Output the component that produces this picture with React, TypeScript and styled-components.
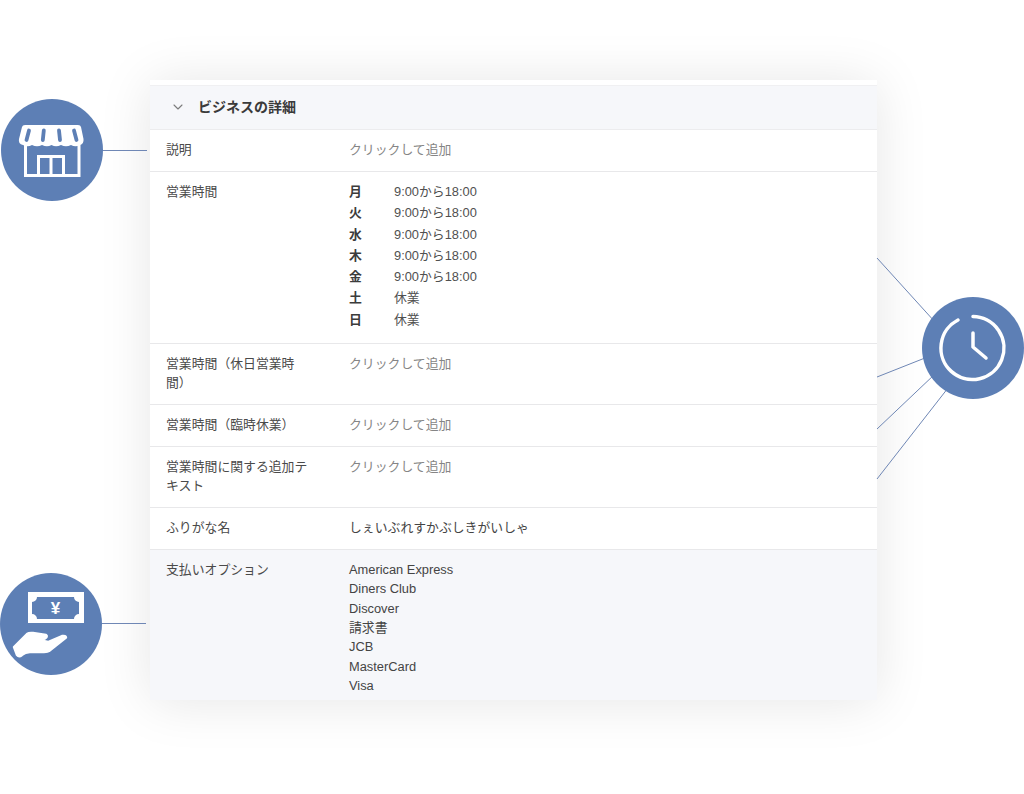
import { Fragment } from 'react'
import styled, { createGlobalStyle } from 'styled-components'
import { ChevronDown } from 'lucide-react'

const GlobalStyle = createGlobalStyle`
  html, body {
    margin: 0;
    padding: 0;
    background: #fff;
  }
`

const Stage = styled.div`
  position: relative;
  width: 1024px;
  height: 794px;
  padding: 80px 147px 0 150px;
  box-sizing: border-box;
  overflow: hidden;
  background: #fff;
  font-family: 'Liberation Sans', 'Noto Sans CJK JP', sans-serif;
  font-size: 12.85px;
  color: #444;
`

const Card = styled.section`
  display: flex;
  flex-direction: column;
  height: 620px;
  padding-top: 5px;
  box-sizing: border-box;
  overflow: hidden;
  background: #fff;
  box-shadow: 0 2px 50px rgba(0, 0, 0, 0.1);
`

const Header = styled.header`
  display: flex;
  align-items: center;
  gap: 12px;
  height: 45px;
  flex: none;
  padding: 0 0 3px 20px;
  box-sizing: border-box;
  background: #f6f7fa;
  border-top: 1px solid #f0f0f2;
  border-bottom: 1px solid #ececee;
  font-size: 14px;
  font-weight: 700;
  color: #3a3a3a;
  svg {
    color: #7b7b7b;
    margin-top: 2px;
  }
`

const Row = styled.div<{ $shaded?: boolean }>`
  display: grid;
  grid-template-columns: 183px 1fr;
  flex: none;
  padding: 10px 0 12px 16px;
  line-height: 19px;
  background: ${(p) => (p.$shaded ? '#f6f7fa' : '#fff')};
  border-bottom: 1px solid #e8e8ea;
  &:last-child {
    flex: 1;
    border-bottom: 0;
  }
`

const Label = styled.div`
  width: 145px;
  color: #4a4a4a;
`

const Placeholder = styled.div`
  color: #858585;
`

const Hours = styled.div`
  display: grid;
  grid-template-columns: 45px 1fr;
  margin: -1px 0 1px;
  line-height: 21.3px;
  color: #505050;
`

const Day = styled.span`
  font-weight: 700;
  color: #3c3c3c;
`

const Options = styled.ul`
  margin: 0;
  padding: 0;
  list-style: none;
  line-height: 19.3px;
`

const Badge = styled.div<{ $left: number; $top: number }>`
  position: absolute;
  left: ${(p) => p.$left}px;
  top: ${(p) => p.$top}px;
  width: 102px;
  height: 102px;
  border-radius: 50%;
  background: #5d7fb5;
  svg {
    display: block;
  }
`

const Connectors = styled.svg`
  position: absolute;
  left: 0;
  top: 0;
  stroke: #6f87b5;
  stroke-width: 1;
`

const hours = [
  ['月', '9:00から18:00'],
  ['火', '9:00から18:00'],
  ['水', '9:00から18:00'],
  ['木', '9:00から18:00'],
  ['金', '9:00から18:00'],
  ['土', '休業'],
  ['日', '休業'],
]

const payments = ['American Express', 'Diners Club', 'Discover', '請求書', 'JCB', 'MasterCard', 'Visa']

function StoreIcon() {
  return (
    <svg width="102" height="102" viewBox="0 0 102 102" fill="none">
      <path d="M24.5 44V76.5H78V44" stroke="#fff" strokeWidth="3" />
      <path d="M37.5 76.5V57.5H62.5V76.5M50 57.5V76.5" stroke="#fff" strokeWidth="3" />
      <path
        d="M24 26H77Q79.5 26 80 28L82.5 40Q83 45 79 46Q74.5 48.5 70 46Q65 48.5 60 46Q55 48.5 50.5 46Q46 48.5 41 46Q36 48.5 31 46Q26.5 48.5 22 46Q17 45 18 40L21 28Q21.5 26 24 26Z"
        fill="#fff"
      />
      <path
        d="M28 31.5L25.5 41M42.8 31.5L41.8 41M58 31.5L59 41M73 31.5L75.5 41"
        stroke="#5d7fb5"
        strokeWidth="3.8"
        strokeLinecap="round"
      />
    </svg>
  )
}

function ClockIcon() {
  return (
    <svg width="102" height="102" viewBox="0 0 102 102" fill="none" stroke="#fff" strokeWidth="3.5" strokeLinecap="round" strokeLinejoin="round">
      <path d="M51 19.5A31.5 31.5 0 1 1 36 23" />
      <path d="M51 36V50L64 61" />
    </svg>
  )
}

function MoneyIcon() {
  return (
    <svg width="102" height="102" viewBox="0 1 102 102" fill="none">
      <rect x="28" y="20" width="56" height="31" fill="#fff" />
      <path
        d="M37 25H74A5 5 0 0 0 79 30V42A5 5 0 0 0 74 47H37A5 5 0 0 0 32 42V30A5 5 0 0 0 37 25Z"
        fill="#5d7fb5"
      />
      <text x="55.5" y="42" textAnchor="middle" fontSize="17" fontWeight="700" fontFamily="'Liberation Sans', sans-serif" fill="#fff">
        ¥
      </text>
      <path
        d="M14 75L27 62Q29 60.5 33 61L46 63Q48 64.5 45 66.5L39 68L48 70L62 64Q66 63.5 66 65.5L49 79Q48 80 44 80H30Q25 80 22 83Q19 85.5 17 83Z"
        fill="#fff"
        stroke="#fff"
        strokeWidth="2.4"
        strokeLinejoin="round"
      />
    </svg>
  )
}

export default function App() {
  return (
    <Stage>
      <GlobalStyle />
      <Card>
        <Header>
          <ChevronDown size={16} strokeWidth={1.6} />
          ビジネスの詳細
        </Header>
        <Row>
          <Label>説明</Label>
          <Placeholder>クリックして追加</Placeholder>
        </Row>
        <Row>
          <Label>営業時間</Label>
          <Hours>
            {hours.map(([day, time]) => (
              <Fragment key={day}>
                <Day>{day}</Day>
                <span>{time}</span>
              </Fragment>
            ))}
          </Hours>
        </Row>
        <Row>
          <Label>営業時間（休日営業時間）</Label>
          <Placeholder>クリックして追加</Placeholder>
        </Row>
        <Row>
          <Label>営業時間（臨時休業）</Label>
          <Placeholder>クリックして追加</Placeholder>
        </Row>
        <Row>
          <Label>営業時間に関する追加テキスト</Label>
          <Placeholder>クリックして追加</Placeholder>
        </Row>
        <Row>
          <Label>ふりがな名</Label>
          <div>しぇいぶれすかぶしきがいしゃ</div>
        </Row>
        <Row $shaded>
          <Label>支払いオプション</Label>
          <Options>
            {payments.map((name) => (
              <li key={name}>{name}</li>
            ))}
          </Options>
        </Row>
      </Card>
      <Connectors width="1024" height="794">
        <line x1="100" y1="150.5" x2="147" y2="150.5" />
        <line x1="100" y1="623.5" x2="146" y2="623.5" />
        <line x1="877" y1="258" x2="935" y2="322" />
        <line x1="877" y1="377" x2="930" y2="356" />
        <line x1="877" y1="429" x2="935" y2="374" />
        <line x1="877" y1="479" x2="948" y2="388" />
      </Connectors>
      <Badge $left={1} $top={99}>
        <StoreIcon />
      </Badge>
      <Badge $left={922} $top={297}>
        <ClockIcon />
      </Badge>
      <Badge $left={0} $top={573}>
        <MoneyIcon />
      </Badge>
    </Stage>
  )
}
